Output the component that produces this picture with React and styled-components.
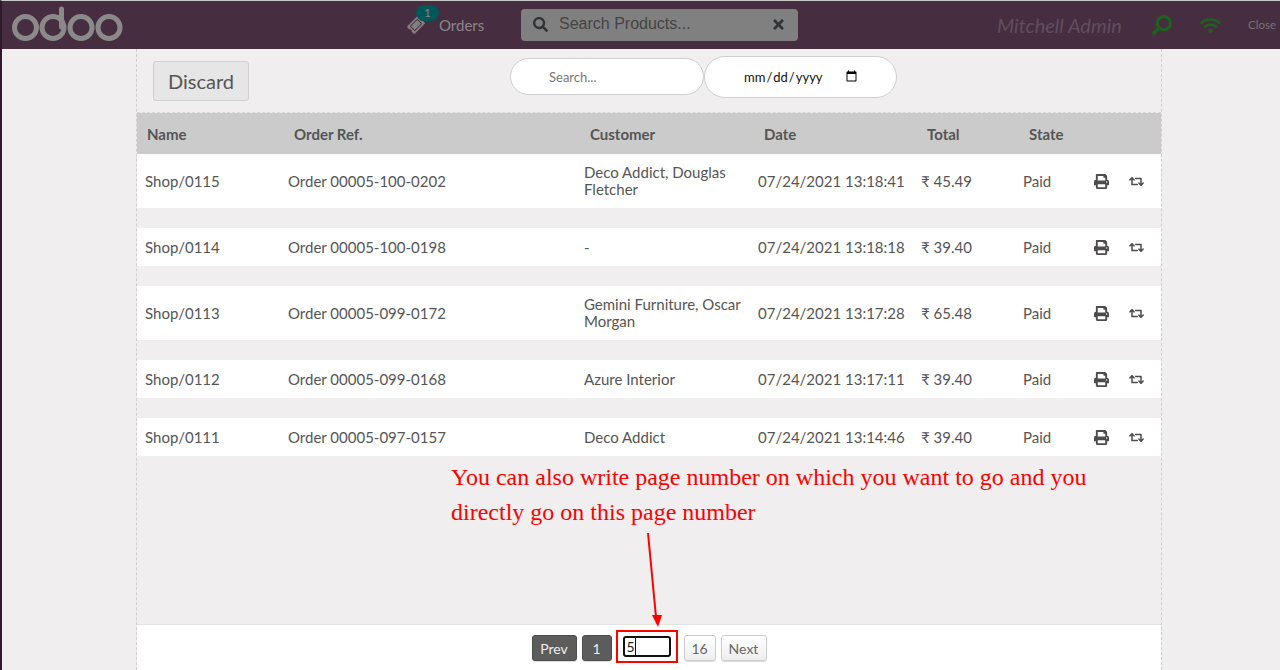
import React from "react"
import styled, { createGlobalStyle } from "styled-components"
import { FaPrint, FaRetweet, FaSearch, FaTimes, FaTicketAlt, FaWifi } from "react-icons/fa"

const orders = [
    { name: "Shop/0115", ref: "Order 00005-100-0202", customer: "Deco Addict, Douglas Fletcher", date: "07/24/2021 13:18:41", total: "₹ 45.49" },
    { name: "Shop/0114", ref: "Order 00005-100-0198", customer: "-", date: "07/24/2021 13:18:18", total: "₹ 39.40" },
    { name: "Shop/0113", ref: "Order 00005-099-0172", customer: "Gemini Furniture, Oscar Morgan", date: "07/24/2021 13:17:28", total: "₹ 65.48" },
    { name: "Shop/0112", ref: "Order 00005-099-0168", customer: "Azure Interior", date: "07/24/2021 13:17:11", total: "₹ 39.40" },
    { name: "Shop/0111", ref: "Order 00005-097-0157", customer: "Deco Addict", date: "07/24/2021 13:14:46", total: "₹ 39.40" }
];

const headers = ["Name", "Order Ref.", "Customer", "Date", "Total", "State"];

const GlobalStyle = createGlobalStyle`
    * { box-sizing: border-box; }
    body {
        margin: 0;
        font-family: Lato, "Open Sans", sans-serif;
        background: #f0eeef;
        color: #555;
    }
`;

const Screen = styled.div`
    width: 1280px;
    height: 670px;
    display: flex;
    flex-direction: column;
    overflow: hidden;
    border-top: 1px solid #c9c9c9;
    border-left: 2px solid #2e1a2a;
`;

const Navbar = styled.header`
    height: 48px;
    flex: none;
    display: flex;
    align-items: center;
    background: #472d40;
    color: #888;
    padding-left: 10px;
`;

const Logo = styled.svg`
    width: 112px;
    height: 36px;
    margin-top: -3px;
    flex: none;
`;

const OrdersTab = styled.div`
    position: relative;
    display: flex;
    align-items: center;
    margin-left: 284px;
    width: 113px;
    font-size: 15px;
    gap: 15px;
    svg { transform: rotate(-45deg); font-size: 16px; color: #808080; }
`;

const Badge = styled.span`
    position: absolute;
    left: 8px;
    top: -11px;
    width: 23px;
    height: 16px;
    border-radius: 8px;
    background: #01585a;
    color: #868686;
    font-size: 12px;
    line-height: 16px;
    text-align: center;
`;

const ProductSearch = styled.div`
    width: 277px;
    height: 32px;
    margin-top: -1px;
    display: flex;
    align-items: center;
    background: #808080;
    border-radius: 4px;
    color: #333;
    padding: 0 12px;
    font-family: "Liberation Sans", sans-serif;
    font-size: 16px;
    color: #444;
    svg { font-size: 15px; flex: none; color: #2f3336; }
`;

const ProductSearchText = styled.span`
    flex: 1;
    margin-left: 11px;
    margin-top: -2px;
`;

const Cashier = styled.span`
    margin-left: 199px;
    font-size: 20px;
    font-style: italic;
    color: #5f4f5b;
    white-space: nowrap;
    width: 155px;
`;

const StatusIcon = styled.span`
    display: flex;
    color: #1f611f;
    font-size: ${p => p.$size}px;
    width: ${p => p.$width}px;
`;

const CloseLabel = styled.span`
    font-size: 11.5px;
    color: #767076;
    margin-top: -2px;
`;

const Content = styled.main`
    position: relative;
    flex: 1;
    width: 1026px;
    margin-left: 134px;
    display: flex;
    flex-direction: column;
    border-left: 1px dashed #cfcfcf;
    border-right: 1px dashed #cfcfcf;
`;

const Toolbar = styled.div`
    height: 64px;
    flex: none;
    position: relative;
    display: flex;
    border-bottom: 1px dashed #d8d8d8;
`;

const DiscardButton = styled.button`
    width: 96px;
    height: 40px;
    margin: 12px 0 0 16px;
    background: #e6e6e6;
    border: 1px solid #cfcfcf;
    border-radius: 3px;
    color: #555;
    font-family: inherit;
    font-size: 20px;
    padding: 0;
`;

const Filters = styled.div`
    display: flex;
    align-items: center;
    margin-left: 261px;
    margin-top: -8px;
    height: 64px;
    padding-top: 7px;
`;

const SearchInput = styled.input`
    width: 194px;
    height: 37px;
    border: 1px solid #cfcfcf;
    border-radius: 19px;
    background: #fff;
    padding-left: 38px;
    font-family: inherit;
    font-size: 13px;
    outline: none;
    &::placeholder { color: #757575; }
`;

const DateInput = styled.input`
    width: 193px;
    height: 42px;
    border: 1px solid #cfcfcf;
    border-radius: 21px;
    background: #fff;
    padding: 0 36px 0 38px;
    font-family: inherit;
    font-size: 13px;
    color: #111;
    outline: none;
`;

const HeaderRow = styled.div`
    height: 41px;
    flex: none;
    display: grid;
    grid-template-columns: 147px 296px 174px 163px 102px 1fr;
    align-items: center;
    padding-left: 10px;
    background: #cbcbcb;
    font-size: 15px;
    font-weight: 700;
    color: #555;
`;

const Row = styled.div`
    height: ${p => p.$tall ? 54 : 38}px;
    flex: none;
    margin-bottom: 20px;
    display: grid;
    grid-template-columns: 143px 296px 174px 163px 102px 71px 35px 1fr;
    align-items: center;
    padding-left: 8px;
    background: #fff;
    font-size: 15px;
    line-height: 17px;
    color: #555;
    &:last-of-type { margin-bottom: 0; }
`;

const CustomerCell = styled.span`
    max-width: 165px;
`;

const RowIcon = styled.span`
    display: flex;
    font-size: 15px;
    color: #4e4b4b;
`;

const Spacer = styled.div`
    flex: 1;
`;

const Pager = styled.nav`
    height: 46px;
    flex: none;
    display: flex;
    align-items: flex-start;
    justify-content: center;
    padding: 5px 0 0 0;
    background: #fff;
    border-top: 1px solid #e4e4e4;
`;

const PageButton = styled.button`
    height: 26px;
    margin-top: 5px;
    width: ${p => p.$width}px;
    padding: 0;
    border: 1px solid ${p => p.$active ? "#4d4d4d" : "#ccc"};
    border-radius: 3px;
    background: ${p => p.$active ? "#5c5c5c" : "linear-gradient(#fff, #eee)"};
    color: ${p => p.$active ? "#eee" : "#666"};
    font-family: inherit;
    font-size: 14px;
    box-shadow: 0 1px 1px rgba(0, 0, 0, 0.15);
    margin-left: ${p => p.$gap}px;
`;

const PageJump = styled.div`
    width: 62px;
    height: 33px;
    margin: 0 6px 0 4px;
    display: flex;
    align-items: center;
    justify-content: center;
    border: 2px solid #f00;
`;

const PageInput = styled.div`
    width: 48px;
    height: 21px;
    border: 2px solid #111;
    border-radius: 3px;
    background: #fff;
    padding-left: 2px;
    font-size: 14px;
    line-height: 17px;
    color: #222;
    span { border-right: 1px solid #111; }
`;

const Note = styled.p`
    position: absolute;
    left: 314px;
    top: 411px;
    margin: 0;
    width: 660px;
    font-family: "Liberation Serif", serif;
    font-size: 24px;
    line-height: 35px;
    color: #f00;
`;

const Arrow = styled.svg`
    position: absolute;
    left: 500px;
    top: 480px;
    width: 30px;
    height: 100px;
`;

const OdooLogo = () => (
    <Logo viewBox="0 0 112 36">
        <g fill="none" stroke="#8a8a8a" strokeWidth="5">
            <circle cx="13.5" cy="21.5" r="11" />
            <circle cx="41" cy="21.5" r="11" />
            <circle cx="69" cy="21.5" r="11" />
            <circle cx="97" cy="21.5" r="11" />
            <path d="M49.5 21V3" strokeLinecap="round" />
        </g>
    </Logo>
);

const App = () => (
    <Screen>
        <GlobalStyle />
        <Navbar>
            <OdooLogo />
            <OrdersTab>
                <FaTicketAlt />
                <Badge>1</Badge>
                Orders
            </OrdersTab>
            <ProductSearch>
                <FaSearch />
                <ProductSearchText>Search Products...</ProductSearchText>
                <FaTimes />
            </ProductSearch>
            <Cashier>Mitchell Admin</Cashier>
            <StatusIcon $size={20} $width={48}><FaSearch style={{ transform: "scaleX(-1)" }} /></StatusIcon>
            <StatusIcon $size={21} $width={48}><FaWifi /></StatusIcon>
            <CloseLabel>Close</CloseLabel>
        </Navbar>
        <Content>
            <Toolbar>
                <DiscardButton>Discard</DiscardButton>
                <Filters>
                    <SearchInput placeholder="Search..." />
                    <DateInput type="date" />
                </Filters>
            </Toolbar>
            <HeaderRow>
                {headers.map(header => <span key={header}>{header}</span>)}
            </HeaderRow>
            {orders.map(order =>
                <Row key={order.name} $tall={order.customer.length > 20}>
                    <span>{order.name}</span>
                    <span>{order.ref}</span>
                    <CustomerCell>{order.customer}</CustomerCell>
                    <span>{order.date}</span>
                    <span>{order.total}</span>
                    <span>Paid</span>
                    <RowIcon><FaPrint /></RowIcon>
                    <RowIcon><FaRetweet /></RowIcon>
                </Row>)}
            <Spacer />
            <Pager>
                <PageButton $active $width={45}>Prev</PageButton>
                <PageButton $active $width={30} $gap={5}>1</PageButton>
                <PageJump>
                    <PageInput><span>5</span></PageInput>
                </PageJump>
                <PageButton $width={32}>16</PageButton>
                <PageButton $width={46} $gap={5}>Next</PageButton>
            </Pager>
            <Note>You can also write page number on which you want to go and you directly go on this page number</Note>
            <Arrow viewBox="0 0 30 100">
                <path d="M11 4 L19 88" stroke="#f00" strokeWidth="2" fill="none" />
                <path d="M15 86 L25 86 L21 98 Z" fill="#f00" />
            </Arrow>
        </Content>
    </Screen>
);

export default App;
